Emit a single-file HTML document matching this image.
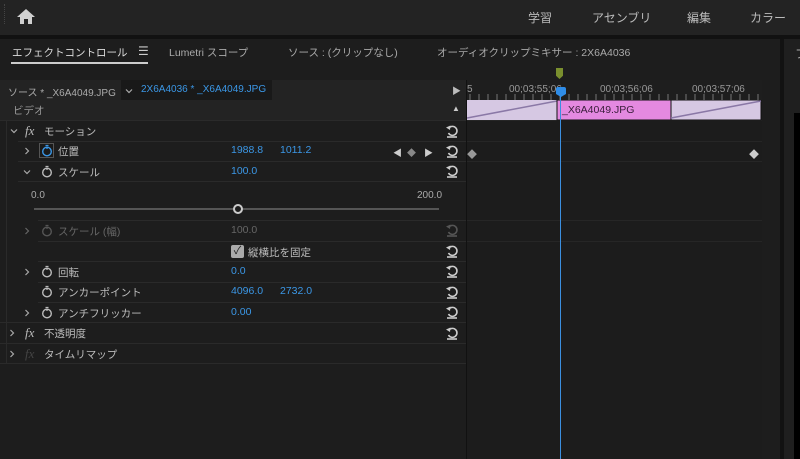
<!DOCTYPE html>
<html><head><meta charset="utf-8"><style>
*{margin:0;padding:0;box-sizing:border-box}
body{width:800px;height:459px;overflow:hidden;background:#1d1d1d;font-family:"Liberation Sans","Noto Sans CJK JP",sans-serif;font-size:10.5px;color:#bdbdbd;position:relative}
.a{position:absolute;white-space:nowrap}
.top{left:0;top:0;width:800px;height:35px;background:#232323}
.sep{left:0;top:35px;width:800px;height:4px;background:#111}
.blue{color:#3b97e6}
.row{position:absolute;left:18px;width:448px;height:1px;background:#2a2a2a}
.rs{position:absolute;left:445px;width:14px;height:14px}
.sw{position:absolute;width:12px;height:13px}
.ch{position:absolute;width:8px;height:8px}
</style></head><body>
<svg width="0" height="0" style="position:absolute"><defs>
<g id="sw"><circle cx="6" cy="7.5" r="4.3" fill="none" stroke="currentColor" stroke-width="1.4"/><path d="M4.5 1.5h3M6 3v2" stroke="currentColor" stroke-width="1.3"/></g>
<g id="rs"><path d="M4 4 A4.5 4.5 0 1 1 3.5 9" fill="none" stroke="currentColor" stroke-width="1.6"/><path d="M1 3.5 L5.5 1.5 L5 6 Z" fill="currentColor"/><path d="M2 13h10" stroke="currentColor" stroke-width="1.6"/></g>
<path id="cr" d="M2.5 1 L5.5 4 L2.5 7" fill="none" stroke="currentColor" stroke-width="1.2"/>
<path id="cd" d="M1 2.5 L4 5.5 L7 2.5" fill="none" stroke="currentColor" stroke-width="1.2"/>
</defs></svg>
<div class="a top"></div>
<div class="a" style="left:4px;top:4px;width:2px;height:20px;border-left:1px dotted #444"></div>
<svg class="a" style="left:17px;top:9px" width="18" height="15" viewBox="0 0 18 15"><path d="M9 0 L18 8 H15 V15 H11 V10 H7 V15 H3 V8 H0 Z" fill="#d0d0d0"/></svg>
<div class="a" style="left:528px;top:9px;font-size:12px;color:#bbb">学習</div>
<div class="a" style="left:592px;top:9px;font-size:12px;color:#bbb">アセンブリ</div>
<div class="a" style="left:687px;top:9px;font-size:12px;color:#bbb">編集</div>
<div class="a" style="left:750px;top:9px;font-size:12px;color:#bbb">カラー</div>
<div class="a sep"></div>
<div class="a" style="left:780px;top:39px;width:4px;height:420px;background:#121212"></div>
<div class="a" style="left:784px;top:39px;width:16px;height:420px;background:#1f1f1f"></div>
<div class="a" style="left:795px;top:45px;color:#aaa;font-size:12px">フ</div>
<div class="a" style="left:794px;top:113px;width:6px;height:346px;background:#000"></div>
<div class="a" style="left:12px;top:45px;font-size:10.5px;color:#ddd">エフェクトコントロール</div>
<div class="a" style="left:138px;top:44px;font-size:12px;color:#ccc">☰</div>
<div class="a" style="left:11px;top:62px;width:137px;height:2px;background:#ccc"></div>
<div class="a" style="left:169px;top:45px;font-size:10.5px;color:#aaa">Lumetri スコープ</div>
<div class="a" style="left:288px;top:45px;font-size:10.5px;color:#aaa">ソース : (クリップなし)</div>
<div class="a" style="left:437px;top:45px;font-size:10.5px;color:#aaa">オーディオクリップミキサー : 2X6A4036</div>
<div class="a" style="left:0;top:80px;width:466px;height:20px;background:#232323"></div>
<div class="a" style="left:8px;top:84px;color:#aaa;font-size:10px">ソース * _X6A4049.JPG</div>
<div class="a" style="left:121px;top:80px;width:151px;height:20px;background:#191919"></div>
<svg class="ch" style="left:125px;top:87px;color:#aaa" viewBox="0 0 8 8"><use href="#cd"/></svg>
<div class="a blue" style="left:141px;top:84px;font-size:10px">2X6A4036 * _X6A4049.JPG</div>
<div class="a" style="left:452px;top:84px;color:#bbb;font-size:9px">▶</div>
<div class="a" style="left:0;top:100px;width:466px;height:20px;background:#232323"></div>
<div class="a" style="left:13px;top:103px;color:#999">ビデオ</div>
<div class="a" style="left:452px;top:104px;color:#ccc;font-size:8px">▲</div>
<div class="a" style="left:466px;top:80px;width:1px;height:379px;background:#111"></div>
<div class="row" style="top:120px;left:0;width:466px"></div>
<div class="row" style="top:141px"></div><div class="row" style="top:161px"></div><div class="row" style="top:181px"></div>
<div class="row" style="top:220px;left:38px;width:428px"></div><div class="row" style="top:241px;left:38px;width:428px"></div><div class="row" style="top:261px;left:38px;width:428px"></div><div class="row" style="top:282px;left:38px;width:428px"></div><div class="row" style="top:302px;left:38px;width:428px"></div>
<div class="row" style="top:322px;left:0;width:466px"></div><div class="row" style="top:343px;left:0;width:466px"></div><div class="row" style="top:363px;left:0;width:466px"></div>
<div class="a" style="left:6px;top:120px;width:1px;height:243px;background:#2a2a2a"></div>
<svg class="ch" style="left:10px;top:127px;color:#aaa" viewBox="0 0 8 8"><use href="#cd"/></svg>
<div class="a" style="left:25px;top:123px;font-style:italic;font-family:'Liberation Serif',serif;font-size:13px;color:#bbb">fx</div>
<div class="a" style="left:44px;top:124px">モーション</div>
<svg class="ch" style="left:23px;top:147px;color:#aaa" viewBox="0 0 8 8"><use href="#cr"/></svg>
<div class="a" style="left:39px;top:143px;width:15px;height:15px;border:1px solid #555;background:#1a1a1a"></div>
<svg class="sw" style="left:41px;top:144px;color:#3b97e6" viewBox="0 0 12 13"><use href="#sw"/></svg>
<div class="a" style="left:58px;top:144px">位置</div>
<div class="a blue" style="left:231px;top:144px">1988.8</div>
<div class="a blue" style="left:280px;top:144px">1011.2</div>
<div class="a" style="left:393px;top:146px;color:#ccc;font-size:9px">◀</div>
<div class="a" style="left:407px;top:146px;color:#888;font-size:9px">◆</div>
<div class="a" style="left:424px;top:146px;color:#ccc;font-size:9px">▶</div>
<svg class="ch" style="left:23px;top:168px;color:#aaa" viewBox="0 0 8 8"><use href="#cd"/></svg>
<div class="a" style="left:58px;top:165px">スケール</div>
<div class="a blue" style="left:231px;top:165px">100.0</div>
<div class="a" style="left:31px;top:190px;font-size:10px;color:#aaa">0.0</div>
<div class="a" style="left:417px;top:190px;font-size:10px;color:#aaa">200.0</div>
<div class="a" style="left:34px;top:208px;width:405px;height:2px;background:#555"></div>
<div class="a" style="left:233px;top:204px;width:10px;height:10px;border-radius:50%;border:2px solid #ccc;background:#1d1d1d"></div>
<svg class="ch" style="left:23px;top:227px;color:#666" viewBox="0 0 8 8"><use href="#cr"/></svg>
<div class="a" style="left:58px;top:224px;color:#666">スケール (幅)</div>
<div class="a" style="left:231px;top:224px;color:#666">100.0</div>
<div class="a" style="left:231px;top:245px;width:13px;height:13px;background:#aaa;border-radius:2px;color:#222;font-size:11px;line-height:13px;text-align:center">✓</div>
<div class="a" style="left:248px;top:245px">縦横比を固定</div>
<svg class="ch" style="left:23px;top:268px;color:#aaa" viewBox="0 0 8 8"><use href="#cr"/></svg>
<div class="a" style="left:58px;top:265px">回転</div>
<div class="a blue" style="left:231px;top:265px">0.0</div>
<div class="a" style="left:58px;top:285px">アンカーポイント</div>
<div class="a blue" style="left:231px;top:285px">4096.0</div>
<div class="a blue" style="left:280px;top:285px">2732.0</div>
<svg class="ch" style="left:23px;top:309px;color:#aaa" viewBox="0 0 8 8"><use href="#cr"/></svg>
<div class="a" style="left:58px;top:306px">アンチフリッカー</div>
<div class="a blue" style="left:231px;top:306px">0.00</div>
<svg class="ch" style="left:8px;top:329px;color:#aaa" viewBox="0 0 8 8"><use href="#cr"/></svg>
<div class="a" style="left:25px;top:325px;font-style:italic;font-family:'Liberation Serif',serif;font-size:13px;color:#bbb">fx</div>
<div class="a" style="left:44px;top:326px">不透明度</div>
<svg class="ch" style="left:8px;top:350px;color:#aaa" viewBox="0 0 8 8"><use href="#cr"/></svg>
<div class="a" style="left:25px;top:346px;font-style:italic;font-family:'Liberation Serif',serif;font-size:13px;color:#444">fx</div>
<div class="a" style="left:44px;top:347px">タイムリマップ</div>
<svg class="sw" style="left:41px;top:165px;color:#bbb" viewBox="0 0 12 13"><use href="#sw"/></svg>
<svg class="sw" style="left:41px;top:224px;color:#555" viewBox="0 0 12 13"><use href="#sw"/></svg>
<svg class="sw" style="left:41px;top:265px;color:#bbb" viewBox="0 0 12 13"><use href="#sw"/></svg>
<svg class="sw" style="left:41px;top:285px;color:#bbb" viewBox="0 0 12 13"><use href="#sw"/></svg>
<svg class="sw" style="left:41px;top:306px;color:#bbb" viewBox="0 0 12 13"><use href="#sw"/></svg>
<svg class="rs" style="top:124px;color:#ccc" viewBox="0 0 14 14"><use href="#rs"/></svg>
<svg class="rs" style="top:144px;color:#ccc" viewBox="0 0 14 14"><use href="#rs"/></svg>
<svg class="rs" style="top:164px;color:#ccc" viewBox="0 0 14 14"><use href="#rs"/></svg>
<svg class="rs" style="top:223px;color:#555" viewBox="0 0 14 14"><use href="#rs"/></svg>
<svg class="rs" style="top:244px;color:#ccc" viewBox="0 0 14 14"><use href="#rs"/></svg>
<svg class="rs" style="top:264px;color:#ccc" viewBox="0 0 14 14"><use href="#rs"/></svg>
<svg class="rs" style="top:285px;color:#ccc" viewBox="0 0 14 14"><use href="#rs"/></svg>
<svg class="rs" style="top:305px;color:#ccc" viewBox="0 0 14 14"><use href="#rs"/></svg>
<svg class="rs" style="top:326px;color:#ccc" viewBox="0 0 14 14"><use href="#rs"/></svg>
<!-- timeline -->
<div class="a" style="left:467px;top:80px;width:295px;height:379px;background:#1c1c1c"></div>
<div class="a" style="left:467px;top:80px;width:295px;height:20px;background:#1e1e1e"></div>
<svg class="a" style="left:467px;top:94px" width="295" height="6"><g stroke="#777" stroke-width="1"><path d="M3 0v6M12 0v6M21 0v6M30 0v6M39 0v6M48 0v6M57 0v6M66 0v6M75 0v6M84 0v6M93 0v6M102 0v6M111 0v6M120 0v6M129 0v6M138 0v6M147 0v6M156 0v6M165 0v6M174 0v6M183 0v6M192 0v6M201 0v6M210 0v6M219 0v6M228 0v6M237 0v6M246 0v6M255 0v6M264 0v6M273 0v6M282 0v6M291 0v6"/></g></svg>
<div class="a" style="left:467px;top:84px;color:#999;font-size:10px">5</div>
<div class="a" style="left:509px;top:84px;color:#999;font-size:10px">00;03;55;06</div>
<div class="a" style="left:600px;top:84px;color:#999;font-size:10px">00;03;56;06</div>
<div class="a" style="left:692px;top:84px;color:#999;font-size:10px">00;03;57;06</div>
<div class="a" style="left:467px;top:120px;width:295px;height:1px;background:#262626"></div>
<div class="a" style="left:467px;top:141px;width:295px;height:1px;background:#262626"></div>
<div class="a" style="left:467px;top:161px;width:295px;height:1px;background:#262626"></div>
<div class="a" style="left:467px;top:220px;width:295px;height:1px;background:#262626"></div>
<div class="a" style="left:467px;top:241px;width:295px;height:1px;background:#262626"></div>
<svg class="a" style="left:467px;top:100px" width="295" height="21"><rect x="0" y="0" width="90" height="20" fill="#d6c8e3"/><path d="M0 18 L90 1" stroke="#8a78a6" stroke-width="1.5"/><rect x="90" y="0" width="114" height="20" fill="#e489e0" stroke="#111" stroke-width="1"/><rect x="204" y="0" width="90" height="20" fill="#d6c8e3" stroke="#111"/><path d="M204 18 L294 1" stroke="#8a78a6" stroke-width="1.5"/></svg>
<div class="a" style="left:562px;top:104px;color:#3a1d3a">_X6A4049.JPG</div>
<div class="a" style="left:556px;top:68px;width:7px;height:11px;background:#7a8f2e;clip-path:polygon(0 0,100% 0,100% 70%,50% 100%,0 70%)"></div>
<div class="a" style="left:560px;top:92px;width:1px;height:367px;background:#3b8fe0"></div>
<div class="a" style="left:556px;top:87px;width:10px;height:10px;background:#2f8de8;border-radius:2px;clip-path:polygon(0 0,100% 0,100% 70%,50% 100%,0 70%)"></div>
<div class="a" style="left:467px;top:146px;color:#999;font-size:10px">◆</div>
<div class="a" style="left:749px;top:146px;color:#ccc;font-size:10px">◆</div>
</body></html>
